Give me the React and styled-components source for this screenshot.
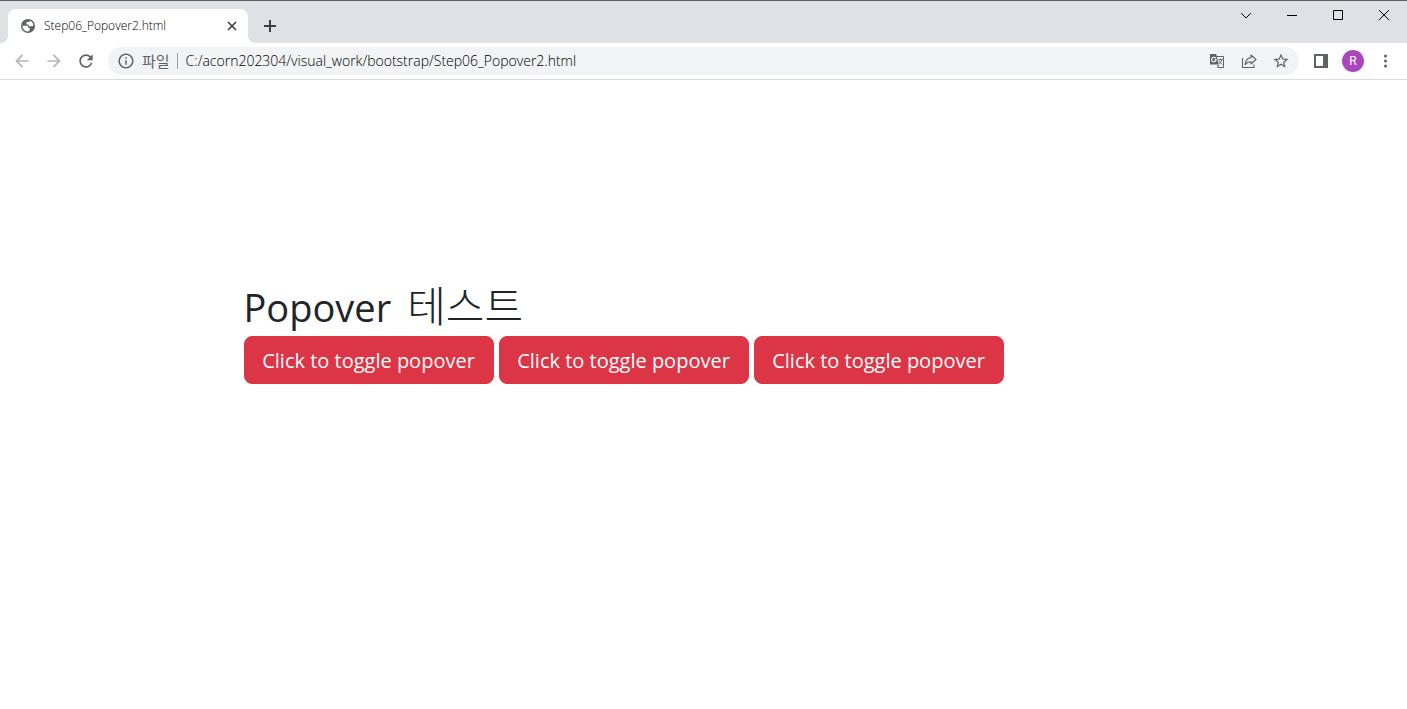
import React, { useState } from 'react';
import styled, { createGlobalStyle } from 'styled-components';
import { MdArrowBack, MdArrowForward, MdRefresh, MdInfoOutline, MdStarBorder } from 'react-icons/md';


const GlobalStyle = createGlobalStyle`
  * {
    box-sizing: border-box;
  }

  body {
    margin: 0;
    background-color: #fff;
    color: #212529;
    font-family: "Open Sans", "Noto Sans CJK KR", sans-serif;
  }

  button {
    font-family: inherit;
    cursor: pointer;
  }
`;

const TabStrip = styled.div`
  display: flex;
  align-items: flex-end;
  height: 43px;
  padding-left: 8px;
  background-color: #dee1e6;
  border-top: 1px solid #5f6368;
`;

const Tab = styled.div`
  position: relative;
  display: flex;
  align-items: center;
  width: 240px;
  height: 34px;
  padding: 0 8px 0 12px;
  border-radius: 8px 8px 0 0;
  background-color: #fff;
  color: #5f6368;

  &::before,
  &::after {
    content: "";
    position: absolute;
    bottom: 0;
    width: 8px;
    height: 8px;
  }

  &::before {
    right: 100%;
    background: radial-gradient(circle at 0 0, #dee1e6 8px, #fff 8px);
  }

  &::after {
    left: 100%;
    background: radial-gradient(circle at 100% 0, #dee1e6 8px, #fff 8px);
  }
`;

const TabTitle = styled.span`
  flex: 1;
  margin-left: 8px;
  color: #000;
  font-size: 12px;
  font-weight: 300;
  line-height: 16px;
`;

const IconButton = styled.button`
  display: flex;
  flex: none;
  align-items: center;
  justify-content: center;
  width: ${(props) => props.$size || 32}px;
  height: ${(props) => props.$height || props.$size || 32}px;
  padding: 0;
  border: none;
  background: none;
  color: ${(props) => props.$color || '#5f6368'};
`;

const NewTab = styled.div`
  display: flex;
  align-items: center;
  height: 34px;
  margin-left: 8px;
`;

const WindowControls = styled.div`
  display: flex;
  align-self: flex-start;
  margin-left: auto;
`;

const Toolbar = styled.div`
  display: flex;
  align-items: center;
  height: 37px;
  padding: 0 6px;
  border-bottom: 1px solid #dadce0;
`;

const AddressBar = styled.div`
  display: flex;
  flex: 1;
  align-items: center;
  height: 28px;
  margin: 0 6px;
  padding: 0 2px 0 9px;
  border-radius: 14px;
  background-color: #f1f3f4;
  color: #5f6368;
`;

const Scheme = styled.label`
  margin-left: 7px;
  padding-right: 7px;
  border-right: 1px solid #9aa0a6;
  font-size: 15px;
  line-height: 16px;
`;

const AddressInput = styled.input`
  flex: 1;
  min-width: 0;
  margin-left: 8px;
  padding: 0;
  border: none;
  outline: none;
  background: none;
  color: #000;
  font-family: inherit;
  font-size: 14px;
  font-weight: 300;
  line-height: 20px;
`;

const Avatar = styled.span`
  display: flex;
  align-items: center;
  justify-content: center;
  width: 22px;
  height: 22px;
  border-radius: 50%;
  background-color: #ab47bc;
  color: #fff;
  font-family: Roboto, sans-serif;
  font-size: 12px;
`;

const Container = styled.main`
  max-width: 1320px;
  margin: 0 auto;
  padding: 200px;
`;

const Title = styled.h1`
  display: flex;
  align-items: baseline;
  gap: 16px;
  height: 48px;
  margin: 0 0 8px;
  font-size: 38px;
  font-weight: 400;
  line-height: 52px;
`;

const Korean = styled.span`
  font-size: 42px;
  font-weight: 300;
`;

const ButtonRow = styled.div`
  display: flex;
  gap: 5px;
`;

const DangerButton = styled.button`
  min-width: 250px;
  padding: 9px 16px 7px;
  border: 1px solid #dc3545;
  border-radius: 8px;
  background-color: #dc3545;
  color: #fff;
  font-size: 20px;
  line-height: 30px;
  white-space: nowrap;
`;

const GlobeIcon = () => (
  <svg width="16" height="16" viewBox="0 0 16 16">
    <circle cx="8" cy="8" r="7" fill="#5f6368" />
    <path d="M2.4 7.8h4c1.4 0 2 .8 2 1.6v.8h1.4v1.4c0 .7-.6 1.2-1.4 1.4v.5A5.6 5.6 0 0 1 2.4 7.8z" fill="#fff" />
    <path d="M9.6 2.7a5.6 5.6 0 0 1 3.9 4.6c-.5.7-1.2 1-2 1H9.6c-.8 0-1-.4-1-1V6.4H6.4V5c0-.7.5-1 1.2-1h1.2c.5 0 .8-.6.8-1.3z" fill="#fff" />
  </svg>
);

const TranslateIcon = () => (
  <svg width="16" height="16" viewBox="0 0 16 16">
    <path d="M7.5 3.5h7v11H8.5" fill="none" stroke="#5f6368" />
    <path d="M1 1h6.2l2.6 10.6H1zM8.2 12h2.2l-2 2.8z" fill="#5f6368" />
    <path d="M6.8 5.2a2.3 2.3 0 1 0 .4 1.5H5.2" fill="none" stroke="#fff" strokeWidth="1.1" />
    <path d="M9.4 6.6h4.4M11.4 5.6v1M12.8 6.8c-.4 1.8-1.4 3-2.8 4M10.2 7.6c.8 1.8 1.8 3 3.2 4" fill="none" stroke="#5f6368" strokeWidth="0.9" />
  </svg>
);

const CloseIcon = () => (
  <svg width="10" height="10" viewBox="0 0 10 10" fill="none" stroke="#3c4043" strokeWidth="1.6">
    <path d="M1 1l8 8M9 1L1 9" />
  </svg>
);

const PlusIcon = () => (
  <svg width="12" height="12" viewBox="0 0 12 12" fill="none" stroke="#3c4043" strokeWidth="2">
    <path d="M6 0v12M0 6h12" />
  </svg>
);

const ShareIcon = () => (
  <svg width="16" height="16" viewBox="0 0 16 16" fill="none" stroke="#5f6368" strokeWidth="1.1">
    <path d="M1.5 5v9.5h11.5v-3" />
    <path d="M10 2l5 4.5-5 4.5V8.7C7.4 8.7 5.4 9.6 4.1 11.6 4.5 7.4 6.6 5 10 4.6z" strokeLinejoin="round" />
  </svg>
);

const PanelIcon = () => (
  <svg width="14" height="14" viewBox="0 0 14 14">
    <path d="M0 0h14v14H0zM2 2v10h7V2z" fill="#5f6368" fillRule="evenodd" />
  </svg>
);

const MenuIcon = () => (
  <svg width="16" height="16" viewBox="0 0 16 16" fill="#5f6368">
    <circle cx="8.5" cy="3" r="1.5" />
    <circle cx="8.5" cy="8" r="1.5" />
    <circle cx="8.5" cy="13" r="1.5" />
  </svg>
);

const windowButtons = [
  { label: 'Search tabs', path: 'M1 4l5 5 5-5' },
  { label: 'Minimize', path: 'M1 6.5h10' },
  { label: 'Maximize', path: 'M1.5 1.5h9v9h-9z' },
  { label: 'Close', path: 'M1 1l10 10M11 1L1 11' },
];

const App = () => {

  const [address, setAddress] = useState("C:/acorn202304/visual_work/bootstrap/Step06_Popover2.html");

  return (
    <>
      <GlobalStyle />
      <header>
        <TabStrip>
          <Tab>
            <GlobeIcon />
            <TabTitle>Step06_Popover2.html</TabTitle>
            <IconButton $size={16} aria-label="Close tab"><CloseIcon /></IconButton>
          </Tab>
          <NewTab>
            <IconButton $size={28} aria-label="New tab"><PlusIcon /></IconButton>
          </NewTab>
          <WindowControls>
            {windowButtons.map((item) => (
              <IconButton key={item.label} $size={46} $height={28} aria-label={item.label}>
                <svg width="12" height="12" viewBox="0 0 12 12" fill="none" stroke="#000" strokeWidth="1">
                  <path d={item.path} />
                </svg>
              </IconButton>
            ))}
          </WindowControls>
        </TabStrip>
        <Toolbar>
          <IconButton $color="#b4b6b9" aria-label="Back"><MdArrowBack size={20} /></IconButton>
          <IconButton $color="#b4b6b9" aria-label="Forward"><MdArrowForward size={20} /></IconButton>
          <IconButton aria-label="Reload"><MdRefresh size={20} /></IconButton>
          <AddressBar>
            <MdInfoOutline size={18} />
            <Scheme htmlFor="address">파일</Scheme>
            <AddressInput id="address" type="text" value={address} onChange={(e) => setAddress(e.target.value)} />
            <IconButton aria-label="Translate"><TranslateIcon /></IconButton>
            <IconButton aria-label="Share"><ShareIcon /></IconButton>
            <IconButton aria-label="Bookmark"><MdStarBorder size={18} /></IconButton>
          </AddressBar>
          <IconButton aria-label="Side panel"><PanelIcon /></IconButton>
          <IconButton aria-label="Profile"><Avatar>R</Avatar></IconButton>
          <IconButton aria-label="Menu"><MenuIcon /></IconButton>
        </Toolbar>
      </header>
      <Container>
        <Title>Popover <Korean>테스트</Korean></Title>
        <ButtonRow>
          <DangerButton type="button">Click to toggle popover</DangerButton>
          <DangerButton type="button">Click to toggle popover</DangerButton>
          <DangerButton type="button">Click to toggle popover</DangerButton>
        </ButtonRow>
      </Container>
    </>
  );
};

export default App;
